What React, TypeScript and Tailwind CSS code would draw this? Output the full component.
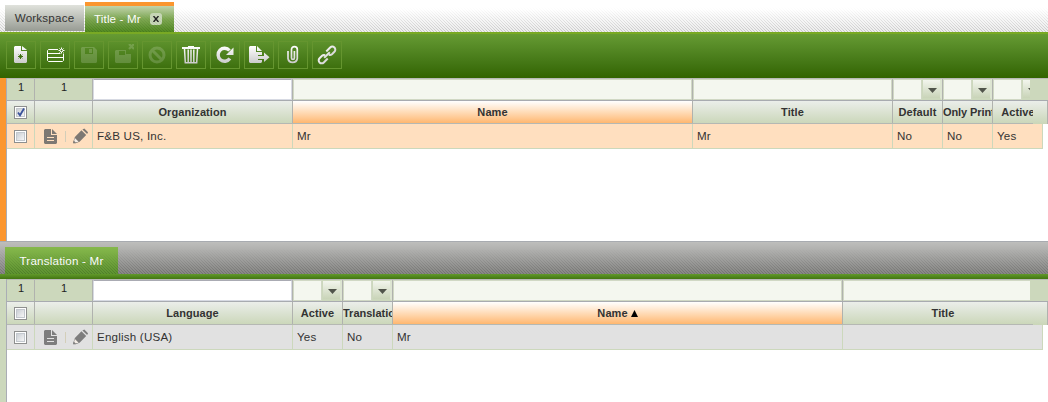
import React from "react";

type FilterKind = "input" | "combo" | "off";
interface Column {
  width: string;
  filter: FilterKind;
  label?: string;
  sorted?: boolean;
  arrow?: boolean;
  value?: string;
}

const topColumns: Column[] = [
  { width: "w-[200px]", filter: "input", label: "Organization", value: "F&B US, Inc." },
  { width: "w-[400px]", filter: "off", label: "Name", sorted: true, value: "Mr" },
  { width: "w-[200px]", filter: "off", label: "Title", value: "Mr" },
  { width: "w-[50px]", filter: "combo", label: "Default", value: "No" },
  { width: "w-[50px]", filter: "combo", label: "Only Print", value: "No" },
  { width: "w-[50px]", filter: "combo", label: "Active", value: "Yes" },
];

const bottomColumns: Column[] = [
  { width: "w-[200px]", filter: "input", label: "Language", value: "English (USA)" },
  { width: "w-[50px]", filter: "combo", label: "Active", value: "Yes" },
  { width: "w-[50px]", filter: "combo", label: "Translation", value: "No" },
  { width: "w-[450px]", filter: "off", label: "Name", sorted: true, arrow: true, value: "Mr" },
  { width: "w-[200px]", filter: "off", label: "Title", value: "" },
];

/* Fine one-pixel diagonal weave laid over the tab strips. */
function Weave({ id, opacity }: { id: string; opacity: string }) {
  return (
    <svg
      className={`pointer-events-none absolute inset-0 h-full w-full [mask-image:linear-gradient(to_bottom,transparent_20%,black)] ${opacity}`}
      shapeRendering="crispEdges"
    >
      <pattern id={id} width="3" height="3" patternUnits="userSpaceOnUse">
        <path d="M0 0h1v1H0zM1 1h1v1H1zM2 2h1v1H2z" fill="#000" />
      </pattern>
      <rect width="100%" height="100%" fill={`url(#${id})`} />
    </svg>
  );
}

function ToolButton({ children, dim }: { children: React.ReactNode; dim?: boolean }) {
  return (
    <div className="flex h-7 w-[30px] shrink-0 items-center justify-center border border-[#65952f]">
      <svg width="22" height="22" viewBox="0 0 22 22" className={dim ? "opacity-[.17]" : ""}>
        <defs>
          <linearGradient id="metal" x1="0" y1="2" x2="0" y2="20" gradientUnits="userSpaceOnUse">
            <stop offset="0" stopColor="#ffffff" />
            <stop offset="1" stopColor="#c8c8c8" />
          </linearGradient>
        </defs>
        {children}
      </svg>
    </div>
  );
}

function Toolbar() {
  return (
    <div className="flex h-[46px] gap-1 border-t-2 border-[#79a924] bg-linear-to-b from-[#669b33] to-[#326400] pt-[7px] pl-[6px]">
      <ToolButton>
        <path fill="url(#metal)" d="M5 2h6v5h6v11l-1 1H5l-1-1V3z" />
        <path fill="url(#metal)" d="M12 2l5 4h-5z" />
        <path stroke="#3f7012" strokeWidth="1" d="M10.5 10v5M8 12.500h5" />
        <path stroke="#3f7012" strokeWidth=".7" d="M8.500 10.500l4 4M12.500 10.500l-4 4" />
      </ToolButton>
      <ToolButton>
        <g stroke="#fff" strokeWidth="1" fill="none">
          <path d="M14 5.500H4.500l-1 1v10l1 1h14l1-1v-7M3.500 9.500h13M3.500 13.500h16" />
          <path d="M17.500 3.500v6M14.500 6.500h6M15.500 4.500l4 4M19.500 4.500l-4 4" />
        </g>
        <circle cx="17.500" cy="6.500" r="1" fill="#3f7012" />
      </ToolButton>
      <ToolButton dim>
        <path fill="#fff" fillRule="evenodd" d="M4 3h12l3 3v12l-1 1H4l-1-1V4zM7 4v6h8V4z" />
        <path fill="#fff" d="M11 5h3v4h-3z" />
      </ToolButton>
      <ToolButton dim>
        <path fill="#fff" fillRule="evenodd" d="M4 6h10v4h5v8l-1 1H4l-1-1V7zM7 7v4h6V7z" />
        <path stroke="#fff" strokeWidth="2.200" d="M17 0l5 5M22 0l-5 5" />
      </ToolButton>
      <ToolButton dim>
        <g fill="none" stroke="#fff" strokeWidth="3">
          <circle cx="11" cy="11" r="7" />
          <path d="M6 6l10 10" />
        </g>
      </ToolButton>
      <ToolButton>
        <path fill="url(#metal)" d="M8 2h6v1h6v2H2V3h6z" />
        <path
          fill="none"
          stroke="url(#metal)"
          strokeWidth="1.500"
          d="M4.500 5l.8 13.700h11.400L17.500 5M8.200 5.500v12.500M11 5.500v12.500M13.800 5.500v12.500"
        />
      </ToolButton>
      <ToolButton>
        <path fill="none" stroke="url(#metal)" strokeWidth="3.400" d="M15.900 14.600A6.500 6.500 0 1 1 15.500 6.500" />
        <path fill="url(#metal)" d="M19.500 3.500V11H12z" />
      </ToolButton>
      <ToolButton>
        <path fill="url(#metal)" d="M2 2h6v6h6v3h-4v5h4v2l-1 1H2l-1-1V3z" />
        <path fill="url(#metal)" d="M9 2l5 5H9z" />
        <path fill="url(#metal)" d="M10 12h6V8.500l5.500 4.700L16 18v-3h-6z" />
      </ToolButton>
      <ToolButton>
        <path
          fill="none"
          stroke="url(#metal)"
          strokeWidth="1.700"
          d="M6 7v7.500a4.700 4.500 0 0 0 9.300 0V5.500a2.900 2.900 0 0 0-5.800 0v8.500a1.400 1.400 0 0 0 2.900 0V7"
        />
      </ToolButton>
      <ToolButton>
        <g transform="rotate(-45 11 11)" fill="none" stroke="url(#metal)" strokeWidth="2">
          <path d="M9 14H3.500a3 3 0 0 1-3-3 3 3 0 0 1 3-3H7a3 3 0 0 1 2.600 1.800" />
          <path d="M13 8h5.500a3 3 0 0 1 3 3 3 3 0 0 1-3 3H15a3 3 0 0 1-2.600-1.800" />
          <path d="M7 11h8" />
        </g>
      </ToolButton>
    </div>
  );
}

function Checkbox({ checked }: { checked?: boolean }) {
  return (
    <div className="h-[13px] w-[13px] border border-[#8e8f8f] bg-white p-px">
      <div className="h-full w-full border border-[#c3c8ce] bg-linear-to-br from-[#cbcfd5] to-[#f6f6f6]">
        {checked && (
          <svg width="9" height="9" viewBox="0 0 9 9" className="-mt-px">
            <path d="M1 4.500L3 7.300 7 .5" fill="none" stroke="#3b539b" strokeWidth="1.800" />
          </svg>
        )}
      </div>
    </div>
  );
}

function FilterCell({ column }: { column: Column }) {
  const { filter, width } = column;
  return (
    <div className={`flex h-full shrink-0 border-r border-[#b0b2ae] ${width}`}>
      {filter === "input" && (
        <div className="h-[21px] flex-1 border border-[#d7dae3] border-t-[#aaabb3] bg-white" />
      )}
      {filter === "off" && <div className="h-[21px] flex-1 border border-[#d0d8c4] bg-[#f4f7ef]" />}
      {filter === "combo" && (
        <>
          <div className="h-[21px] w-[29px] border border-[#d0d8c4] bg-[#f4f7ef]" />
          <div className="flex h-[21px] flex-1 items-center justify-center border-t border-r-2 border-b-2 border-l border-[#ccd8bc] border-r-[#dde5d2] bg-linear-to-b from-[#f2f5ed] to-[#c9d4b8] pt-[2px] pl-px">
            <svg width="9" height="5" viewBox="0 0 9 5" className="shrink-0">
              <path d="M0 0h9L4.500 5z" fill="#50544b" />
            </svg>
          </div>
        </>
      )}
    </div>
  );
}

function Grid({ columns, tone, ink, checked }: { columns: Column[]; tone: string; ink: string; checked?: boolean }) {
  return (
    <div className="w-full min-w-0 overflow-hidden border-l border-[#aaadb5] bg-white">
      <div className="flex h-[23px] border-t border-b border-t-[#b9bab7] border-b-[#a8abb0] bg-[#ccd8bc]">
        <div className="flex w-[1023px] overflow-hidden text-[11px] text-[#222]">
          <div className="w-7 shrink-0 border-r border-[#b0b2ae] pt-px pl-px text-center leading-[14px]">1</div>
          <div className="w-[58px] shrink-0 border-r border-[#b0b2ae] pt-px pl-px text-center leading-[14px]">1</div>
          {columns.map((c, i) => (
            <FilterCell key={i} column={c} />
          ))}
        </div>
      </div>
      <div className="flex h-[23px] border-r border-[#b0b2ae] bg-linear-to-b from-[#ebeeea] to-[#cad6b8] text-[11px] font-bold">
        <div className="flex w-[1026px] overflow-hidden border-b border-[#b5b8b3]">
          <div className="flex w-7 shrink-0 items-center justify-center border-r border-[#b0b2ae]">
            <Checkbox checked={checked} />
          </div>
          <div className="w-[58px] shrink-0 border-r border-[#b0b2ae]" />
          {columns.map((c, i) => (
            <div
              key={i}
              className={`flex shrink-0 items-center overflow-hidden whitespace-nowrap ${
                c.label === "Only Print"
                  ? "justify-start tracking-[-.1px]"
                  : c.label === "Translation"
                    ? "justify-start"
                    : "justify-center tracking-[.08px]"
              } ${i === columns.length - 1 ? "" : "border-r border-[#b0b2ae]"} ${c.width} ${
                c.sorted ? "bg-linear-to-b from-white via-[#ffdcb8] to-[#ffb76f]" : ""
              }`}
            >
              {c.label}
              {c.arrow && (
                <svg width="7" height="7" viewBox="0 0 7 7" className="ml-[3px]">
                  <path d="M3.500 0L7 7H0z" fill="#000" />
                </svg>
              )}
            </div>
          ))}
        </div>
      </div>
      <div className={`flex h-[25px] w-[1036px] border-b border-[#ccd8bc] ${tone}`}>
        <div className="flex w-7 shrink-0 items-center justify-center border-r border-[#ccd8bc]">
          <Checkbox />
        </div>
        <div className={`flex w-[58px] shrink-0 items-center border-r border-[#ccd8bc] pl-[9px] ${ink}`}>
          <svg width="13" height="15" viewBox="0 0 13 15" className="shrink-0">
            <path fill="currentColor" fillRule="evenodd" d="M1 0h6v6h6v8l-1 1H1l-1-1V1zM3 8v1h7V8zm0 3v1h7v-1z" />
            <path fill="currentColor" d="M8 0l5 5H8z" />
          </svg>
          <div className="mr-[7px] ml-[8px] h-[11px] w-px shrink-0 bg-[#d3ceb9]" />
          <svg width="16" height="16" viewBox="0 0 17 16" className="shrink-0">
            <path fill="currentColor" d="M2 9l7-7 5 5-7 7-5 2-2-1zM10 1l2-1 4 4-1 2z" />
            <path fill="#f5eee7" d="M2 10l4 4-4 1-1-1z" />
            <path fill="currentColor" d="M1 13l2 2-3 1z" />
          </svg>
        </div>
        {columns.map((c, i) => (
          <div
            key={i}
            className={`flex shrink-0 items-center border-r border-[#ccd8bc] pl-1 leading-4 tracking-[.2px] ${c.width}`}
          >
            {c.value}
          </div>
        ))}
      </div>
    </div>
  );
}

export default function App() {
  return (
    <div className="flex h-[402px] w-[1048px] flex-col overflow-hidden bg-white font-['Liberation_Sans',Arial,sans-serif] text-[11.6px] text-[#333]">
      <div className="relative flex h-8 items-end gap-px bg-linear-to-b from-white from-30% to-[#ececec] pl-[5px]">
        <Weave id="weave-top" opacity="opacity-15" />
        <div className="relative mb-px flex h-[26px] w-[79px] items-center justify-center bg-linear-to-b from-[#e0e2dc] to-[#989c94] leading-4 tracking-[.2px]">
          Workspace
        </div>
        <div className="relative flex h-[30px] w-[89px] items-center border-t-4 border-[#fb962f] bg-linear-to-b from-[#c2d3ac] via-[#7ea852] to-[#528b20] pl-[9px] leading-4 tracking-[.15px] whitespace-nowrap text-white">
          <Weave id="weave-tab" opacity="opacity-10" />
          Title - Mr
          <span className="mb-px ml-[9px] flex h-3 w-3 shrink-0 items-center justify-center rounded-[3px] bg-[#c7d7b7]">
            <svg width="6" height="6" viewBox="0 0 6 6">
              <path d="M.5 0l5 6M5.500 0l-5 6" stroke="#222" strokeWidth="1.400" />
            </svg>
          </span>
        </div>
      </div>
      <Toolbar />
      <div className="flex h-[164px] border-b border-[#a8abb0]">
        <div className="w-[6px] shrink-0 bg-[#fb962f]" />
        <Grid columns={topColumns} tone="bg-[#ffdfbf]" ink="text-[#7d7873]" checked />
      </div>
      <div className="relative flex h-8 items-end bg-linear-to-b from-[#bebebc] to-[#868684] pl-[5px]">
        <Weave id="weave-mid" opacity="opacity-15" />
        <div className="relative flex h-[27px] w-[113px] items-center justify-center bg-linear-to-b from-[#86b84c] to-[#5d9330] leading-4 tracking-[.2px] text-white">
          <Weave id="weave-sub" opacity="opacity-15" />
          Translation - Mr
        </div>
      </div>
      <div className="h-[5px] shrink-0 bg-linear-to-b from-[#62992b] to-[#427610]" />
      <div className="flex flex-1">
        <div className="w-[6px] shrink-0 bg-[#ccd8bc]" />
        <Grid columns={bottomColumns} tone="bg-[#e1e1e1]" ink="text-[#7d7d7d]" />
      </div>
    </div>
  );
}
